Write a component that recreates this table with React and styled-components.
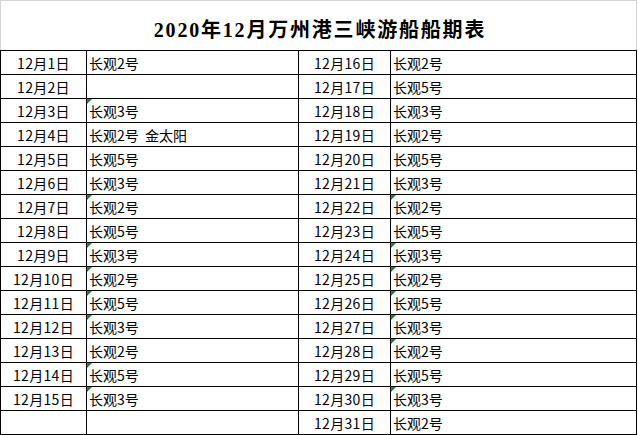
import React from "react";
import styled, { createGlobalStyle } from "styled-components";

const Global = createGlobalStyle`
  html, body { margin: 0; padding: 0; background: #fff; }
  body { font-family: "Noto Sans CJK SC", "Noto Sans", sans-serif; color: #000; }
`;

const Sheet = styled.div`
  width: 637px;
  display: flex;
  flex-direction: column;
`;

const Title = styled.div`
  box-sizing: border-box;
  height: 50px;
  border: 1px solid #d4d4d4;
  border-bottom: none;
  display: flex;
  align-items: center;
  justify-content: center;
  padding-top: 6px;
  padding-left: 3px;
  font-family: "Liberation Serif", "Noto Sans CJK SC", serif;
  font-weight: bold;
  font-size: 20px;
  letter-spacing: 1.8px;
`;

const Grid = styled.div`
  display: grid;
  grid-template-columns: 86px 212px 92px 246px;
  grid-auto-rows: 24px;
  border-top: 1px solid #000;
  border-left: 1px solid #000;
`;

const Cell = styled.div`
  position: relative;
  box-sizing: border-box;
  border-right: 1px solid #000;
  border-bottom: 1px solid #000;
  display: flex;
  align-items: center;
  justify-content: ${(p) => (p.$center ? "center" : "flex-start")};
  padding-left: ${(p) => (p.$center ? "0" : "2px")};
  font-size: 14px;
  letter-spacing: ${(p) => (p.$center ? "0.3px" : "0")};
  line-height: 1;
  white-space: pre;
  &::before {
    content: "";
    display: ${(p) => (p.$flag ? "block" : "none")};
    position: absolute;
    left: 0;
    top: 0;
    width: 0;
    height: 0;
    border-top: 5px solid #1a8a1a;
    border-right: 5px solid transparent;
  }
`;

const left = [
  ["12月1日", "长观2号", false],
  ["12月2日", "", false],
  ["12月3日", "长观3号", true],
  ["12月4日", "长观2号  金太阳", false],
  ["12月5日", "长观5号", false],
  ["12月6日", "长观3号", false],
  ["12月7日", "长观2号", true],
  ["12月8日", "长观5号", false],
  ["12月9日", "长观3号", true],
  ["12月10日", "长观2号", true],
  ["12月11日", "长观5号", true],
  ["12月12日", "长观3号", true],
  ["12月13日", "长观2号", false],
  ["12月14日", "长观5号", true],
  ["12月15日", "长观3号", true],
  ["", "", false],
];

const right = [
  ["12月16日", "长观2号", false],
  ["12月17日", "长观5号", false],
  ["12月18日", "长观3号", false],
  ["12月19日", "长观2号", false],
  ["12月20日", "长观5号", false],
  ["12月21日", "长观3号", false],
  ["12月22日", "长观2号", true],
  ["12月23日", "长观5号", false],
  ["12月24日", "长观3号", true],
  ["12月25日", "长观2号", true],
  ["12月26日", "长观5号", true],
  ["12月27日", "长观3号", true],
  ["12月28日", "长观2号", true],
  ["12月29日", "长观5号", false],
  ["12月30日", "长观3号", true],
  ["12月31日", "长观2号", false],
];

export default function App() {
  return (
    <>
      <Global />
      <Sheet>
        <Title>2020年12月万州港三峡游船船期表</Title>
        <Grid>
          {left.map((l, i) => {
            const r = right[i];
            return (
              <React.Fragment key={i}>
                <Cell $center>{l[0]}</Cell>
                <Cell $flag={l[2]}>{l[1]}</Cell>
                <Cell $center>{r[0]}</Cell>
                <Cell $flag={r[2]}>{r[1]}</Cell>
              </React.Fragment>
            );
          })}
        </Grid>
      </Sheet>
    </>
  );
}
